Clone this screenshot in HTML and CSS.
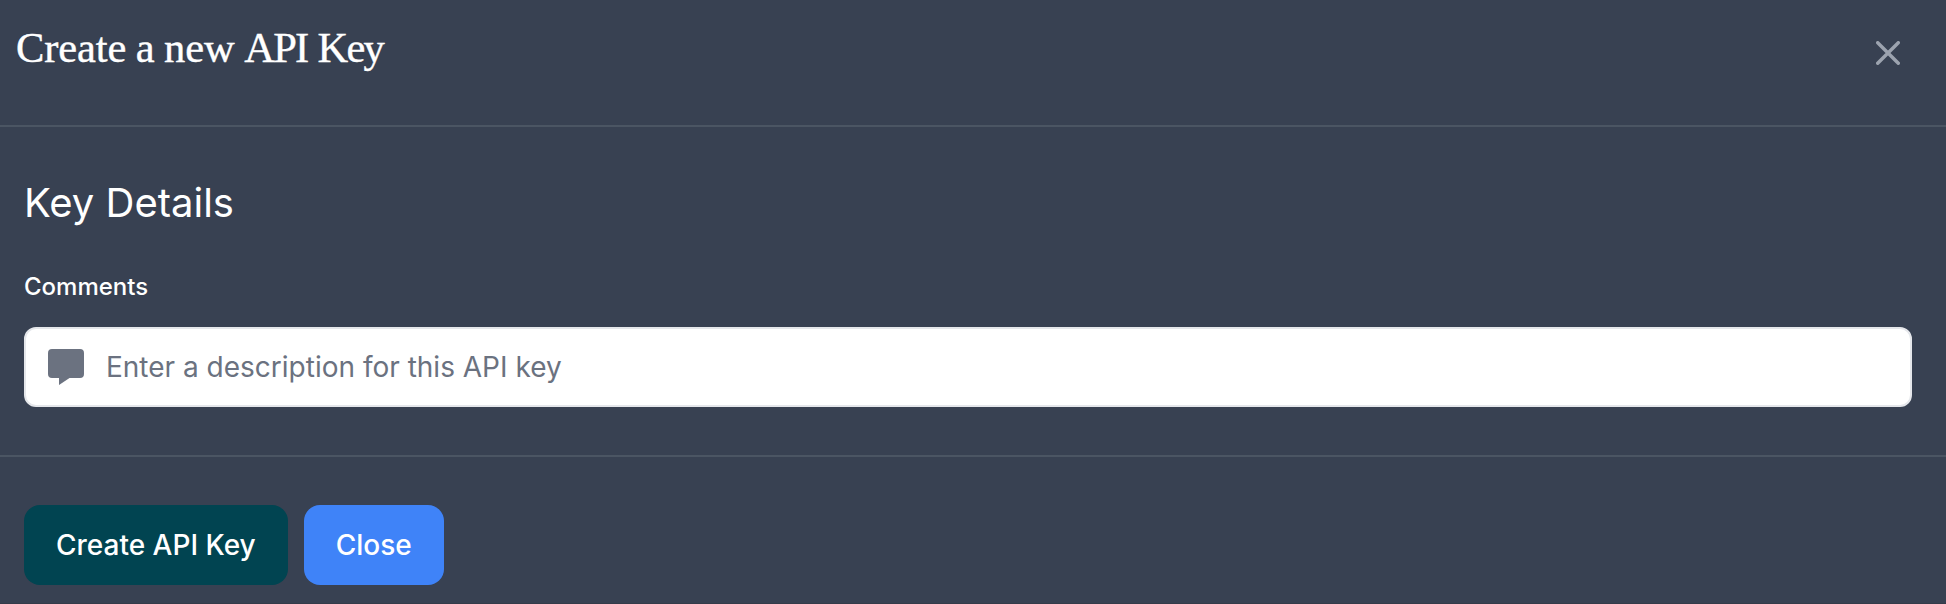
FILE: index.html
```html
<!DOCTYPE html>
<html lang="en">
<head>
<meta charset="utf-8">
<title>Create a new API Key</title>
<link rel="stylesheet" href="styles.css">
</head>
<body>
<main class="modal">
  <header class="modal-header">
    <h1 class="modal-title">Create a new <span class="tight">API Key</span></h1>
    <button class="dismiss" type="button" aria-label="Close dialog">
      <svg width="24" height="24" viewBox="0 0 14 14" fill="none" stroke="currentColor" stroke-width="2" stroke-linecap="round" stroke-linejoin="round"><path d="m1 1 6 6m0 0 6 6M7 7l6-6M7 7l-6 6"/></svg>
    </button>
  </header>
  <section class="modal-body">
    <h2 class="section-title">Key Details</h2>
    <label class="label" for="comments">Comments</label>
    <div class="field">
      <svg class="field-icon" width="36" height="36" viewBox="0 0 36 36" fill="currentColor"><path d="M4 0h28a4 4 0 0 1 4 4v21a4 4 0 0 1-4 4H21.5L11 36v-7H4a4 4 0 0 1-4-4V4a4 4 0 0 1 4-4z"/></svg>
      <input class="input" id="comments" type="text" placeholder="Enter a description for this API key">
    </div>
  </section>
  <footer class="modal-footer">
    <button class="button button-primary" type="button">Create API Key</button>
    <button class="button button-secondary" type="button">Close</button>
  </footer>
</main>
</body>
</html>
```
FILE: styles.css
```css
* { box-sizing: border-box; }
body {
  margin: 0;
  background: #384152;
  color: #fff;
  font-family: Inter, sans-serif;
}
.modal {
  height: 604px;
  overflow: hidden;
  border-bottom: 1px solid #343b49;
}
.modal-header {
  display: flex;
  justify-content: space-between;
  align-items: flex-start;
  height: 127px;
  padding: 20px 46px 0 16px;
  border-bottom: 2px solid #4b5563;
}
.modal-title {
  margin: 0;
  font: 400 42.5px/56px "Liberation Serif", serif;
  letter-spacing: -0.1px;
  word-spacing: -1px;
  white-space: nowrap;
  -webkit-text-stroke: 0.4px #fff;
}
.tight {
  letter-spacing: -1.7px;
  word-spacing: 1px;
}
.dismiss {
  display: flex;
  margin-top: 21px;
  padding: 0;
  border: 0;
  background: none;
  color: #9ca3af;
}
.modal-body {
  height: 330px;
  padding: 48px 34px 0 24px;
  border-bottom: 2px solid #4b5563;
}
.section-title {
  margin: 0;
  font-size: 40px;
  font-weight: 400;
  line-height: 56px;
}
.label {
  display: block;
  margin: 40px 0 24px;
  font-size: 24px;
  font-weight: 500;
  line-height: 32px;
}
.field {
  display: flex;
  align-items: center;
  gap: 22px;
  height: 80px;
  padding: 0 22px;
  border: 2px solid #e5e7eb;
  border-radius: 12px;
  background: #fff;
}
.field-icon {
  flex: none;
  color: #6b7280;
}
.input {
  flex: 1;
  height: 40px;
  padding: 0;
  border: 0;
  outline: 0;
  background: none;
  color: #111827;
  font: 400 28px/40px Inter, sans-serif;
}
.input::placeholder {
  color: #6b7280;
  opacity: 1;
}
.modal-footer {
  display: flex;
  gap: 16px;
  padding: 48px 24px 0;
}
.button {
  height: 80px;
  padding: 0 32px;
  border: 0;
  border-radius: 16px;
  color: #fff;
  font: 500 28px/40px Inter, sans-serif;
}
.button-primary { background: #014451; }
.button-secondary { background: #3f83f8; }
```
